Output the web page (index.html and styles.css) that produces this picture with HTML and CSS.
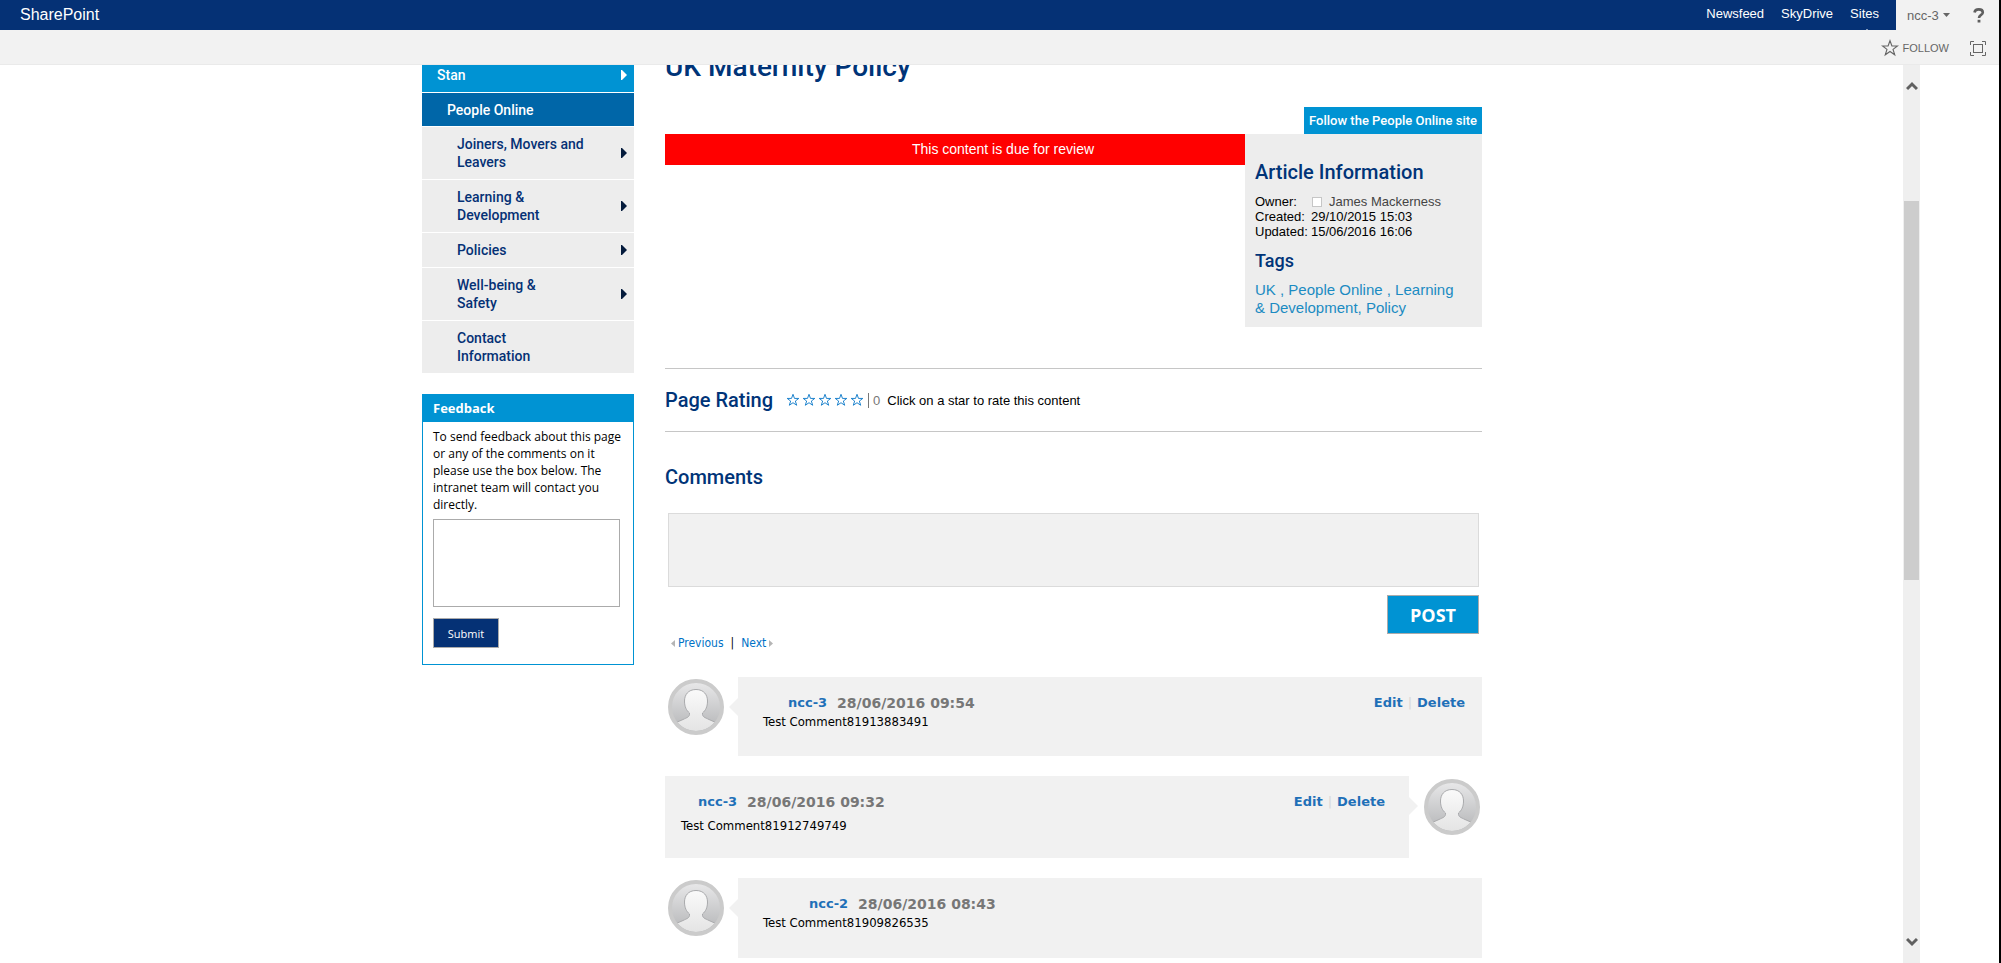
FILE: index.html
```html
<!DOCTYPE html>
<html lang="en">
<head>
<meta charset="utf-8">
<title>UK Maternity Policy</title>
<link rel="stylesheet" href="styles.css">
</head>
<body>
<svg class="defs" aria-hidden="true">
  <defs>
    <linearGradient id="disc" x1="0" y1="0" x2="0" y2="1"><stop offset="0" stop-color="#e9e9ea"/><stop offset="1" stop-color="#b2b3b5"/></linearGradient>
    <linearGradient id="person" x1="0" y1="0" x2="0" y2="1"><stop offset="0" stop-color="#fafafa"/><stop offset="1" stop-color="#e2e2e2"/></linearGradient>
    <clipPath id="inner"><circle cx="28" cy="28" r="24"/></clipPath>
    <symbol id="avatar" viewBox="0 0 56 56">
      <circle cx="28" cy="28" r="26" fill="url(#disc)"/>
      <path clip-path="url(#inner)" d="M28 10.5C20 10.500 16.500 16 16.500 22C16.500 28 18.500 31.500 21.500 34C22 38 19 38.500 15 40.500L7 44V56H49V44L41 40.500C37 38.500 34 38 34.500 34C37.500 31.500 39.500 28 39.500 22C39.500 16 36 10.500 28 10.500Z" fill="url(#person)" stroke="#a9aaac"/>
      <circle cx="28" cy="28" r="26" fill="none" stroke="#cbcbcb" stroke-width="4"/>
    </symbol>
    <symbol id="star" viewBox="0 0 16 16"><path d="M8 1.500L9.700 6.200H14.600L10.700 9.200L12.200 14L8 11.100L3.800 14L5.300 9.200L1.400 6.200H6.300Z" fill="none" stroke="currentColor"/></symbol>
  </defs>
</svg>

<header class="suite">
  <div class="suite-blue">
    <a class="brand" href="#">SharePoint</a>
    <nav class="suite-nav">
      <a href="#">Newsfeed</a>
      <a href="#">SkyDrive</a>
      <a class="current" href="#">Sites</a>
    </nav>
  </div>
  <div class="suite-user">
    <button class="user" type="button">ncc-3<svg width="7" height="4" viewBox="0 0 7 4"><path d="M0 0H7L3.500 4Z" fill="#666"/></svg></button>
    <button class="help" type="button" aria-label="Help"><svg width="12" height="15" viewBox="0 0 12 15"><path d="M1.500 4.500C1.800 2.300 3.600 1.400 5.800 1.400C8.300 1.400 9.800 2.500 9.800 4.400C9.800 7 6 6.800 6 10" fill="none" stroke="#5f5f5f" stroke-width="2.600"/><rect x="4.600" y="11.800" width="2.800" height="2.700" fill="#5f5f5f"/></svg></button>
  </div>
</header>

<div class="ribbon">
  <button class="follow" type="button"><svg width="18" height="18"><use href="#star"/></svg>FOLLOW</button>
  <button class="focus" type="button" aria-label="Focus on content"><svg width="16" height="15" viewBox="0 0 16 15" fill="none" stroke="#666"><rect x="3.500" y="3.500" width="9" height="8"/><path d="M.5 4V.5H4M12 .5H15.500V4M15.500 11V14.500H12M4 14.500H.5V11"/></svg></button>
</div>

<div class="workspace">
  <div class="viewport">
    <div class="page">
      <aside class="side">
        <nav class="menu">
          <a class="root" href="#"><span>Stan</span><svg class="tip" viewBox="0 0 6 10"><path d="M0 0H1L6 5L1 10H0Z"/></svg></a>
          <a class="section" href="#"><span>People Online</span></a>
          <a class="item" href="#"><span>Joiners, Movers and Leavers</span><svg class="tip" viewBox="0 0 6 10"><path d="M0 0H1L6 5L1 10H0Z"/></svg></a>
          <a class="item" href="#"><span>Learning &amp;<br>Development</span><svg class="tip" viewBox="0 0 6 10"><path d="M0 0H1L6 5L1 10H0Z"/></svg></a>
          <a class="item" href="#"><span>Policies</span><svg class="tip" viewBox="0 0 6 10"><path d="M0 0H1L6 5L1 10H0Z"/></svg></a>
          <a class="item" href="#"><span>Well-being &amp;<br>Safety</span><svg class="tip" viewBox="0 0 6 10"><path d="M0 0H1L6 5L1 10H0Z"/></svg></a>
          <a class="item" href="#"><span>Contact<br>Information</span></a>
        </nav>
        <form class="feedback">
          <h2>Feedback</h2>
          <div class="feedback-body">
            <label for="fb">To send feedback about this page or any of the comments on it please use the box below. The intranet team will contact you directly.</label>
            <textarea id="fb"></textarea>
            <button type="button">Submit</button>
          </div>
        </form>
      </aside>

      <main class="main">
        <h1>UK Maternity Policy</h1>
        <div class="site-follow"><a href="#">Follow the People Online site</a></div>
        <div class="article">
          <p class="notice">This content is due for review</p>
          <section class="info">
            <h2>Article Information</h2>
            <dl>
              <dt>Owner:</dt><dd class="owner"><i class="presence"></i>James Mackerness</dd>
              <dt>Created:</dt><dd>29/10/2015 15:03</dd>
              <dt>Updated:</dt><dd>15/06/2016 16:06</dd>
            </dl>
            <h3>Tags</h3>
            <p class="tags"><a href="#">UK</a> , <a href="#">People Online</a> , <a href="#">Learning<br>&amp;&nbsp;Development</a>, <a href="#">Policy</a></p>
          </section>
        </div>

        <section class="rating">
          <h2>Page Rating</h2>
          <div class="stars">
            <button type="button" aria-label="1 star"><svg width="14" height="14"><use href="#star"/></svg></button>
            <button type="button" aria-label="2 stars"><svg width="14" height="14"><use href="#star"/></svg></button>
            <button type="button" aria-label="3 stars"><svg width="14" height="14"><use href="#star"/></svg></button>
            <button type="button" aria-label="4 stars"><svg width="14" height="14"><use href="#star"/></svg></button>
            <button type="button" aria-label="5 stars"><svg width="14" height="14"><use href="#star"/></svg></button>
          </div>
          <span class="count">0</span>
          <span>Click on a star to rate this content</span>
        </section>

        <section class="comments">
          <h2><label for="comment">Comments</label></h2>
          <form class="compose">
            <textarea id="comment"></textarea>
            <button type="button">POST</button>
          </form>
          <nav class="pager">
            <a href="#"><svg width="4" height="7" viewBox="0 0 4 7"><path d="M4 0V7L0 3.500Z" fill="#b5b5b5"/></svg>Previous</a>
            <span>|</span>
            <a href="#">Next<svg width="4" height="7" viewBox="0 0 4 7"><path d="M0 0V7L4 3.500Z" fill="#b5b5b5"/></svg></a>
          </nav>

          <article class="comment">
            <svg class="avatar"><use href="#avatar"/></svg>
            <div class="bubble">
              <div class="meta"><a href="#">ncc-3</a><time>28/06/2016 09:54</time><span class="actions"><a href="#">Edit</a><i>|</i><a href="#">Delete</a></span></div>
              <p>Test Comment81913883491</p>
            </div>
          </article>
          <article class="comment reverse">
            <svg class="avatar"><use href="#avatar"/></svg>
            <div class="bubble">
              <div class="meta"><a href="#">ncc-3</a><time>28/06/2016 09:32</time><span class="actions"><a href="#">Edit</a><i>|</i><a href="#">Delete</a></span></div>
              <p>Test Comment81912749749</p>
            </div>
          </article>
          <article class="comment readonly">
            <svg class="avatar"><use href="#avatar"/></svg>
            <div class="bubble">
              <div class="meta"><a href="#">ncc-2</a><time>28/06/2016 08:43</time></div>
              <p>Test Comment81909826535</p>
            </div>
          </article>
        </section>
      </main>
    </div>
  </div>
  <div class="scrollbar" aria-hidden="true">
    <svg width="12" height="10" viewBox="0 0 12 10"><path d="M1 8L6 3L11 8" fill="none" stroke="#606060" stroke-width="3"/></svg>
    <div class="track"><div class="thumb"></div></div>
    <svg width="12" height="10" viewBox="0 0 12 10"><path d="M1 2L6 7L11 2" fill="none" stroke="#606060" stroke-width="3"/></svg>
  </div>
</div>
</body>
</html>
```
FILE: styles.css
```css
* { box-sizing: border-box; }

body {
  margin: 0;
  height: 100vh;
  display: flex;
  flex-direction: column;
  overflow: hidden;
  border-right: 2px solid #000;
  background: #fff;
  color: #000;
  font: 13px/15px "Liberation Sans", Arial, sans-serif;
}

a { text-decoration: none; color: inherit; }
button { font: inherit; color: inherit; border: 0; padding: 0; background: none; cursor: pointer; }
h1, h2, h3, p, dl, dd { margin: 0; }
i { font-style: normal; }
.defs { position: absolute; width: 0; height: 0; }

h1, h2, h3, .menu, .site-follow { font-family: Roboto, "Open Sans", sans-serif; font-weight: 500; }
h1, h2, h3 { color: #003478; }

/* Suite bar */
.suite { display: flex; height: 30px; flex: none; background: #f2f2f2; }
.suite-blue {
  flex: 1;
  display: flex;
  align-items: center;
  justify-content: space-between;
  padding: 0 17px 2px 20px;
  background: #053175;
  color: #fff;
}
.brand { font-size: 16px; }
.suite-nav { display: flex; gap: 17px; line-height: 28px; }
.current { position: relative; }
.current::after {
  content: "";
  position: absolute;
  left: 16px;
  bottom: -2px;
  border: 1px solid transparent;
  border-bottom-color: #fff;
}
.suite-user { width: 103px; display: flex; justify-content: space-between; align-items: center; padding: 0 14px 0 11px; color: #666; }
.user { display: flex; align-items: center; gap: 4px; }
.help { display: flex; }

.ribbon {
  display: flex;
  flex: none;
  height: 35px;
  align-items: center;
  justify-content: flex-end;
  gap: 21px;
  padding: 2px 13px 0 0;
  background: #f2f2f2;
  border-bottom: 1px solid #eaeaea;
  color: #666;
}
.follow { display: flex; align-items: center; gap: 4px; font-size: 11px; }
.focus { display: flex; }

/* Scrolling workspace */
.workspace { flex: 1; min-height: 0; display: flex; padding-right: 79px; }
.viewport { flex: 1; overflow: hidden; padding-left: 1px; }
.page { display: flex; gap: 31px; width: 100%; max-width: 1060px; margin: -7px auto 0; }

.scrollbar {
  width: 17px;
  flex: none;
  display: flex;
  flex-direction: column;
  align-items: center;
  padding: 16px 0;
  background: #efefef;
}
.track { flex: 1; width: 15px; padding-top: 110px; }
.thumb { height: 51.5%; background: #cdcdcd; }

/* Left column */
.side { width: 212px; flex: none; }
.menu { display: flex; flex-direction: column; gap: 1px; font-size: 14px; line-height: 18px; }
.menu a { display: flex; align-items: center; justify-content: space-between; padding: 8px 7px 8px 35px; background: #ededed; color: #053175; }
.menu .root { background: #0093d3; color: #fff; padding-left: 15px; }
.menu .section { background: #0066a8; color: #fff; padding: 8px 7px 7px 25px; }
.menu .item span { width: 130px; }
.tip { width: 6px; height: 10px; fill: #041b3c; }
.root .tip { fill: #fff; }

.feedback { margin-top: 21px; border: 1px solid #0093d3; font-family: "Open Sans", "Noto Sans", sans-serif; }
.feedback h2 { padding: 5px 10px; background: #0093d3; color: #fff; font: 700 13px/17px "Open Sans", sans-serif; }
.feedback-body { display: flex; flex-direction: column; align-items: flex-start; padding: 6px 4px 16px 10px; }
.feedback label { font-size: 12px; line-height: 17px; }
.feedback textarea { width: 187px; height: 88px; margin: 6px 0 11px; border: 1px solid #ababab; resize: none; }
.feedback button { width: 66px; height: 30px; border: 1px solid #ababab; background: #053175; color: #fff; font-size: 11px; }

/* Article */
.main { flex: 1; min-width: 0; }
h1 { font-size: 28px; line-height: 18px; margin-bottom: 31px; }
.site-follow { display: flex; justify-content: flex-end; font-size: 13px; line-height: 27px; }
.site-follow a { padding: 0 5px; background: #0093d3; color: #fff; }
.article { display: flex; align-items: flex-start; }
.notice { flex: 1; padding: 7px 0 8px 96px; background: #f00; color: #fff; font-size: 14px; line-height: 16px; text-align: center; }
.info { width: 237px; padding: 25px 10px 10px; background: #ededed; }
h2 { font-size: 20px; line-height: 26px; }
.info dl { display: grid; grid-template-columns: 56px 1fr; margin-top: 9px; }
.owner { display: flex; align-items: center; gap: 7px; color: #444; }
.presence { width: 10px; height: 10px; margin-left: 1px; border: 1px solid #c6c6c6; background: #fff; }
.info h3 { margin-top: 10px; font-size: 18px; line-height: 24px; }
.tags { margin-top: 8px; font-size: 15px; line-height: 18px; color: #1b8bc2; }

.rating { display: flex; align-items: center; height: 64px; margin-top: 41px; border: 1px solid #c6c6c6; border-width: 1px 0; }
.stars { display: flex; gap: 2px; margin: 0 4px 0 13px; color: #0072c6; }
.stars button { display: flex; }
.count { border-left: 1px solid #777; padding-left: 4px; margin-right: 7px; color: #777; }

/* Comments */
.comments { padding-top: 32px; }
.compose { display: flex; flex-direction: column; align-items: flex-end; padding: 23px 3px 0; gap: 8px; }
.compose textarea { width: 100%; height: 74px; border: 1px solid #dbdbdb; background: #f1f1f1; resize: none; }
.compose button { width: 92px; height: 39px; border: 1px solid #ababab; background: #0093d3; color: #fff; font: 700 18px "Open Sans", sans-serif; }
.pager { display: flex; gap: 7px; margin: 1px 0 26px 6px; font: 12px/16px "DejaVu Sans Condensed", "DejaVu Sans", sans-serif; }
.pager a { display: flex; align-items: center; gap: 3px; color: #0072c6; }

.comment { display: flex; gap: 14px; margin-bottom: 20px; padding-left: 3px; font: 13px/18px "DejaVu Sans Condensed", "DejaVu Sans", sans-serif; }
.avatar { width: 56px; height: 56px; flex: none; margin-top: 2px; }
.bubble { position: relative; flex: 1; min-height: 79px; padding: 17px 17px 20px 25px; background: #f1f1f1; }
.bubble::before {
  content: "";
  position: absolute;
  top: 21px;
  right: 100%;
  border: solid transparent;
  border-width: 9px 9px 9px 0;
  border-right-color: #f1f1f1;
}
.meta { display: flex; gap: 10px; padding-left: 25px; font: 700 13px/18px "DejaVu Sans", sans-serif; color: #777; }
.meta time { font-size: 14px; }
.meta a { color: #1f70b8; }
.actions { display: flex; gap: 5px; margin-left: auto; }
.actions i { color: #d8d8d8; font-weight: 400; }
.bubble p { margin-top: 1px; }

.reverse { flex-direction: row-reverse; gap: 15px; padding: 0 2px 0 0; }
.reverse .avatar { margin-top: 3px; }
.reverse .bubble { min-height: 82px; padding: 17px 24px 20px 16px; }
.reverse .meta { padding-left: 17px; }
.reverse .bubble p { margin-top: 6px; }
.reverse .bubble::before { right: auto; left: 100%; border-width: 9px 0 9px 9px; border-left-color: #f1f1f1; }

.readonly .bubble { min-height: 80px; }
.readonly .meta { padding-left: 46px; }
```
